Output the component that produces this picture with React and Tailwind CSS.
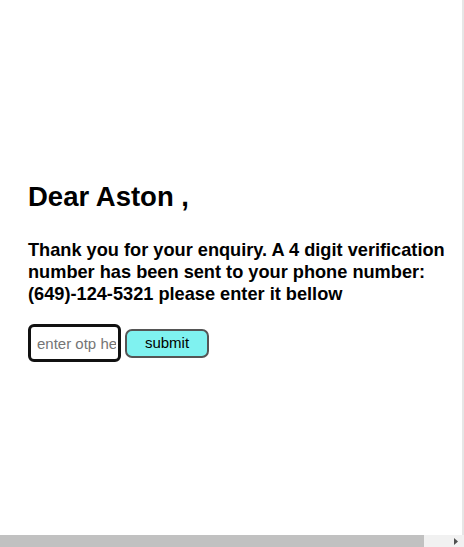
import { useState } from 'react';

const App = () => {
    const [otp, setOtp] = useState('');

    return (
        <div className="flex flex-col h-[547px] w-[464px] overflow-hidden bg-white font-['Liberation_Sans',Arial,sans-serif]">
            {/* Page */}
            <div className="flex-1 flex">
                <div className="w-[462px] pl-[28px] pt-[181px] text-black">
                    <h1 className="text-[27.5px] leading-[32px] font-bold">Dear Aston ,</h1>
                    <p className="mt-[26px] text-[18.2px] leading-[22px] font-bold w-[430px]">
                        Thank you for your enquiry. A 4 digit verification number has been sent to your phone number: (649)-124-5321 please enter it bellow
                    </p>

                    {/* OTP form */}
                    <div className="flex items-center gap-[4px] mt-[19px]">
                        <input
                            type="text"
                            autoFocus
                            className="w-[93px] h-[38px] border-[3px] border-[#111] rounded-[6px] pl-[6px] pr-[2px] text-[15px] text-black placeholder:text-[#757575] outline-none"
                            placeholder="enter otp here"
                            value={otp}
                            onChange={e => setOtp(e.target.value)}
                        />
                        <button className="w-[84px] h-[29px] bg-[#7ff2f0] border-2 border-[#555] rounded-[7px] text-[15px] text-black">
                            submit
                        </button>
                    </div>
                </div>
                <div className="w-[2px] bg-[#e6e6e6]" />
            </div>

            {/* Horizontal scrollbar */}
            <div className="flex h-[12px] bg-[#f1f1f1]">
                <div className="w-[424px] bg-[#c1c1c1]" />
                <div className="flex-1 flex items-center justify-end pr-[6px]">
                    <svg width="4" height="7" viewBox="0 0 4 7">
                        <path d="M0 0 L4 3.5 L0 7 Z" fill="#505050" />
                    </svg>
                </div>
            </div>
        </div>
    );
};

export default App;
